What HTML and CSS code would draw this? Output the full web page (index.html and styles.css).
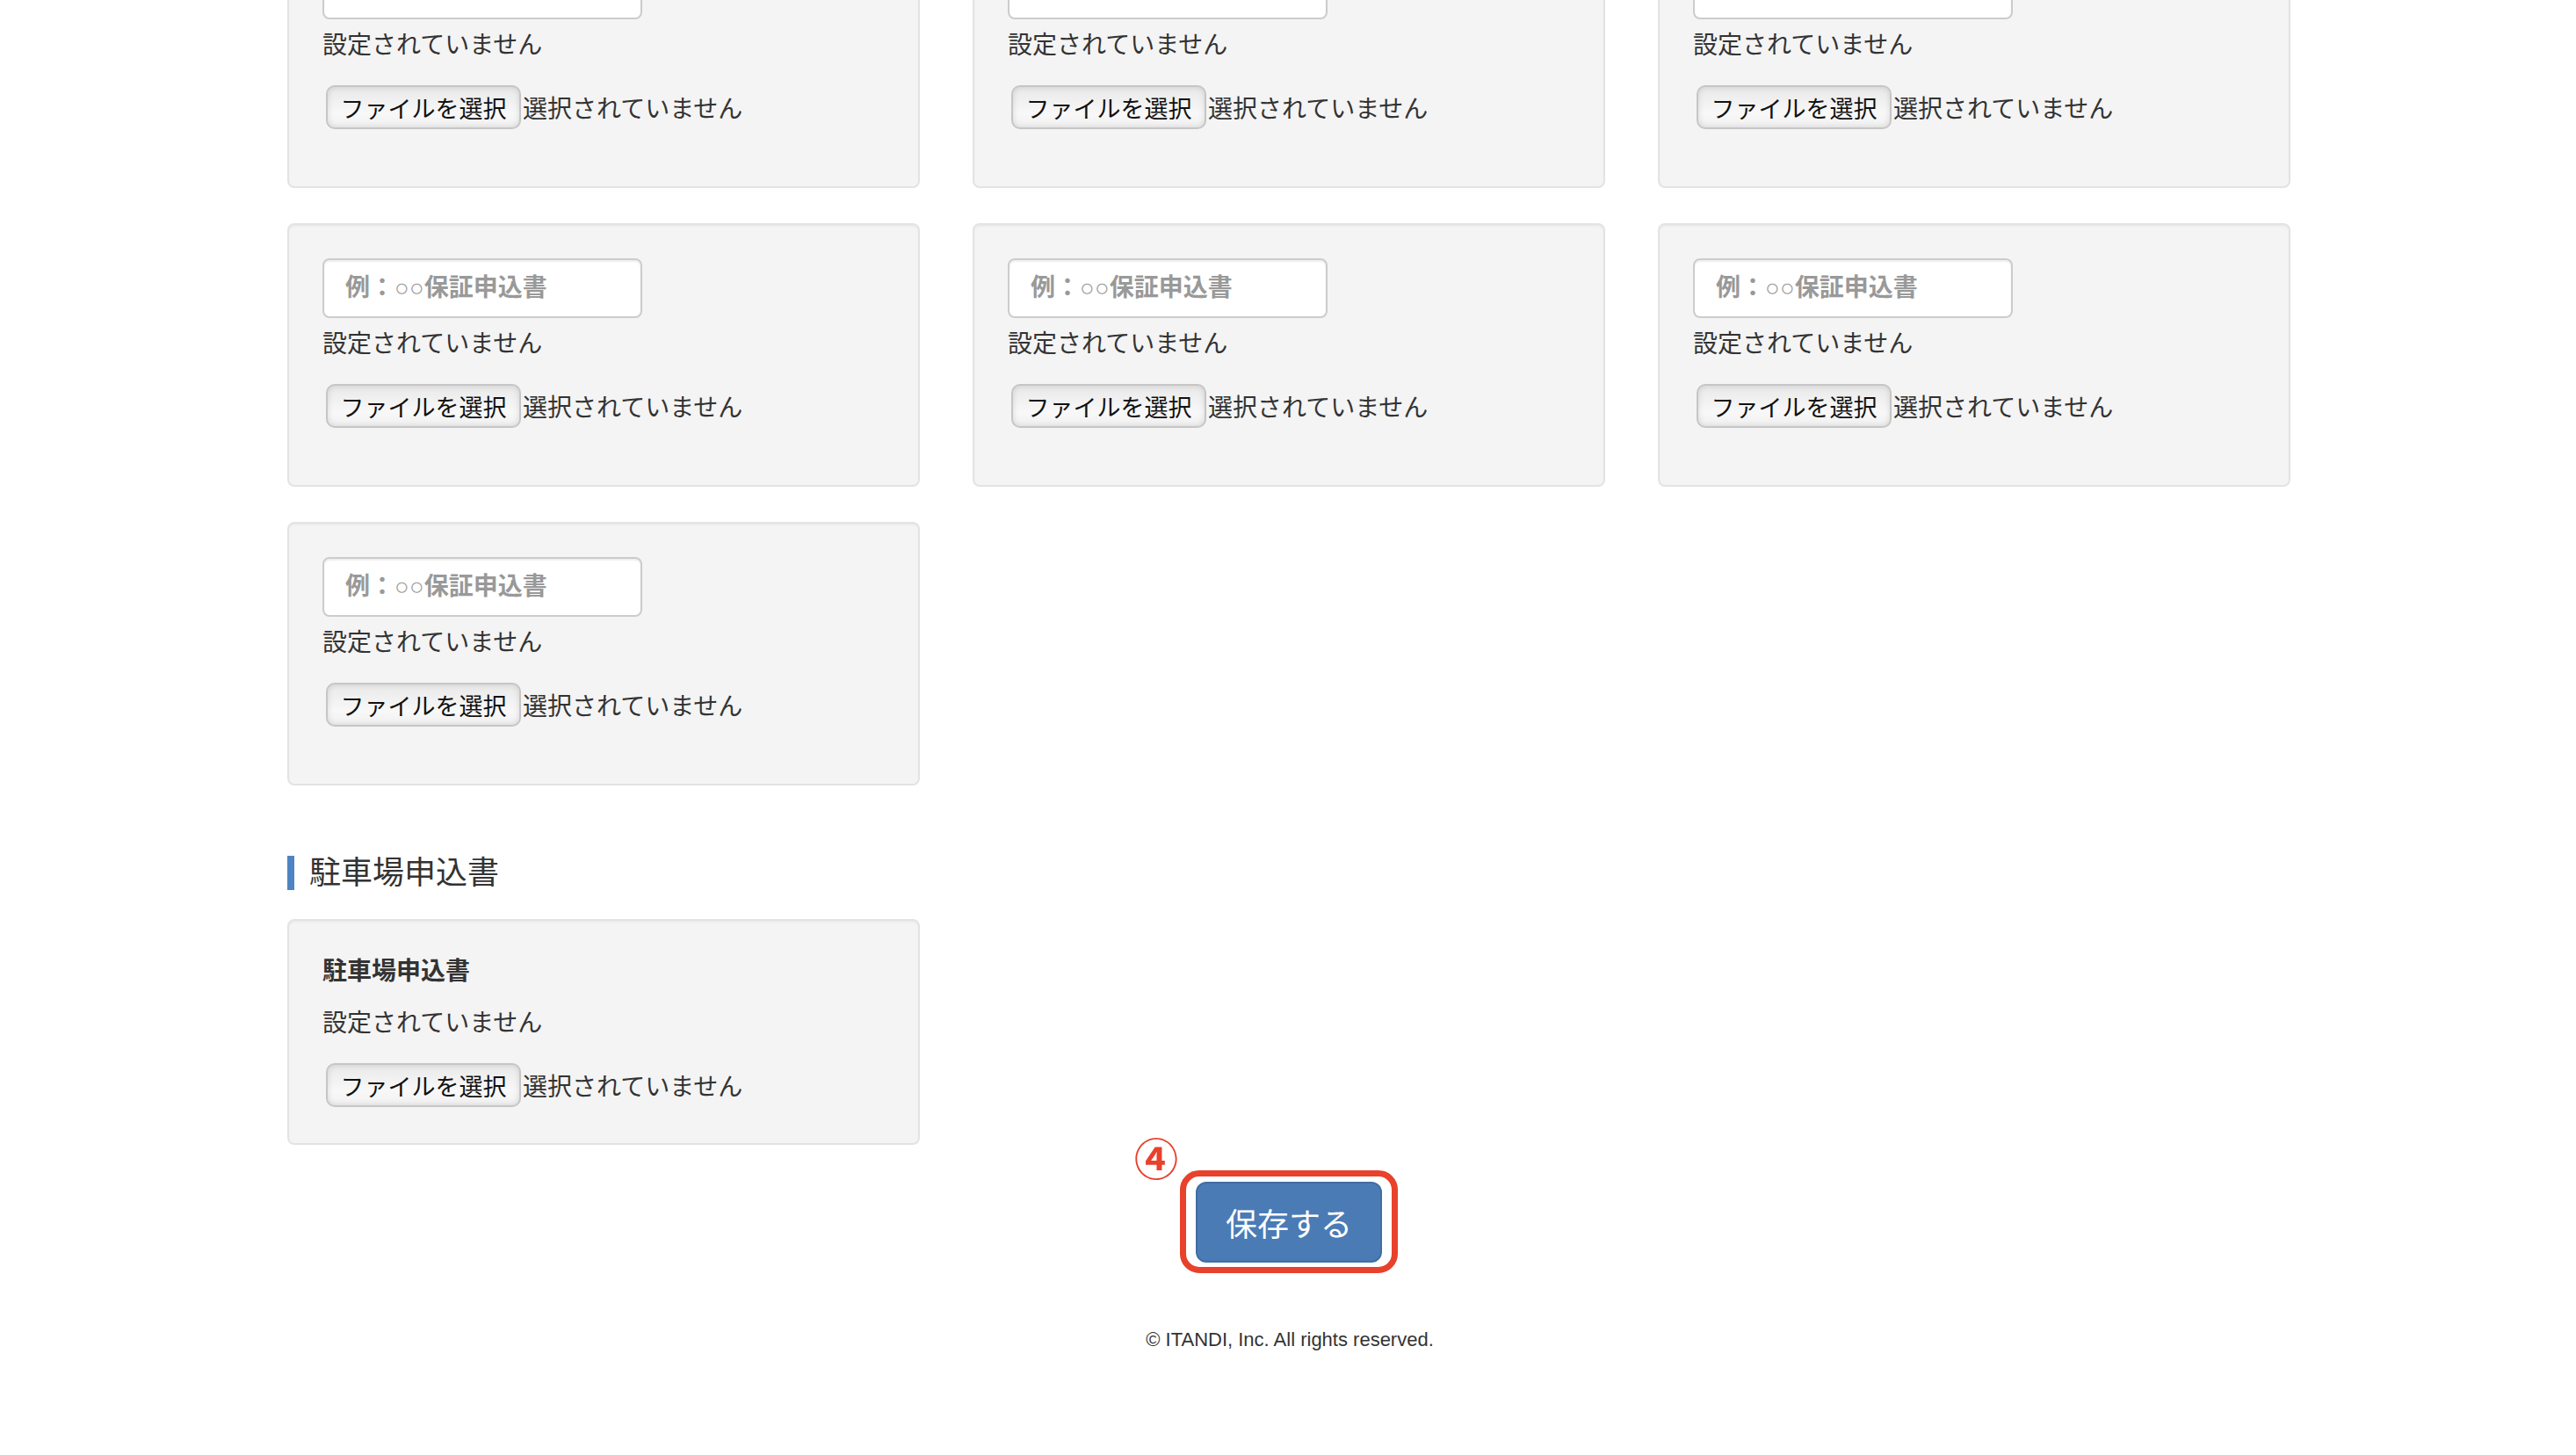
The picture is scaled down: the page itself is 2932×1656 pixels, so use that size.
FILE: index.html
```html
<!DOCTYPE html>
<html lang="ja">
<head>
    <meta charset="utf-8">
    <title>書類設定</title>
    <link rel="stylesheet" href="styles.css">
</head>
<body>
    <div class="container">
        <div class="doc-grid">
            <div class="well well-input">
                <input type="text" class="doc-name" placeholder="例：○○保証申込書">
                <p class="status">設定されていません</p>
                <div class="file-row"><button type="button" class="file-btn">ファイルを選択</button><span class="file-none">選択されていません</span></div>
            </div>
            <div class="well well-input">
                <input type="text" class="doc-name" placeholder="例：○○保証申込書">
                <p class="status">設定されていません</p>
                <div class="file-row"><button type="button" class="file-btn">ファイルを選択</button><span class="file-none">選択されていません</span></div>
            </div>
            <div class="well well-input">
                <input type="text" class="doc-name" placeholder="例：○○保証申込書">
                <p class="status">設定されていません</p>
                <div class="file-row"><button type="button" class="file-btn">ファイルを選択</button><span class="file-none">選択されていません</span></div>
            </div>
            <div class="well well-input">
                <input type="text" class="doc-name" placeholder="例：○○保証申込書">
                <p class="status">設定されていません</p>
                <div class="file-row"><button type="button" class="file-btn">ファイルを選択</button><span class="file-none">選択されていません</span></div>
            </div>
            <div class="well well-input">
                <input type="text" class="doc-name" placeholder="例：○○保証申込書">
                <p class="status">設定されていません</p>
                <div class="file-row"><button type="button" class="file-btn">ファイルを選択</button><span class="file-none">選択されていません</span></div>
            </div>
            <div class="well well-input">
                <input type="text" class="doc-name" placeholder="例：○○保証申込書">
                <p class="status">設定されていません</p>
                <div class="file-row"><button type="button" class="file-btn">ファイルを選択</button><span class="file-none">選択されていません</span></div>
            </div>
            <div class="well well-input">
                <input type="text" class="doc-name" placeholder="例：○○保証申込書">
                <p class="status">設定されていません</p>
                <div class="file-row"><button type="button" class="file-btn">ファイルを選択</button><span class="file-none">選択されていません</span></div>
            </div>
        </div>

        <h3 class="section-title">駐車場申込書</h3>
        <div class="doc-grid">
            <div class="well well-fixed">
                <div class="doc-label">駐車場申込書</div>
                <p class="status">設定されていません</p>
                <div class="file-row"><button type="button" class="file-btn">ファイルを選択</button><span class="file-none">選択されていません</span></div>
            </div>
        </div>

        <div class="actions">
            <div class="save-wrap">
                <span class="mark-num">④</span>
                <button type="submit" class="btn-save">保存する</button>
                <span class="mark-box"></span>
            </div>
        </div>
    </div>

    <footer class="footer">© ITANDI, Inc. All rights reserved.</footer>
</body>
</html>
```

FILE: styles.css
```css
body { margin: 0; background: #fff; color: #333; font-family: "Liberation Sans", "Noto Sans CJK JP", sans-serif; font-size: 28px; line-height: 40px; }
.container { width: 2280px; margin: -86px auto 0; padding-left: 2px; }

.doc-grid { display: grid; grid-template-columns: repeat(3, 720px); column-gap: 60px; row-gap: 40px; }
.well { background: #f4f4f4; border: 2px solid #e3e3e3; border-radius: 8px; padding: 38px; box-shadow: inset 0 2px 2px rgba(0,0,0,0.04); }

.doc-name { display: block; box-sizing: border-box; width: 364px; height: 68px; margin: 0; padding: 12px 24px; border: 2px solid #ccc; border-radius: 8px; background: #fff; font-family: "Liberation Sans", "Noto Sans CJK JP", sans-serif; font-size: 28px; color: #555; box-shadow: inset 0 2px 2px rgba(0,0,0,0.07); }
.doc-name::placeholder { color: #999; font-weight: bold; }

.status { margin: 0; height: 40px; }
.well-input .status { margin-top: 10px; }
.well-fixed .status { margin-top: 19px; }
.doc-label { font-weight: bold; height: 40px; }

.file-row { display: flex; align-items: baseline; margin-top: 25px; height: 50px; }
.well-input .file-row { margin-bottom: 27px; }
.well-fixed .file-row { margin-bottom: 3px; }
.file-btn { box-sizing: border-box; width: 222px; height: 50px; margin: 0 0 0 4px; padding: 0; border: 2px solid #c6c6c6; border-radius: 10px; background: linear-gradient(#e9e9e9, #f8f8f8 65%, #f1f1f1); box-shadow: inset 0 0 7px rgba(0,0,0,0.13); font-family: "Liberation Sans", "Noto Sans CJK JP", sans-serif; font-size: 27px; color: #111; text-align: center; }
.file-none { margin-left: 2px; font-size: 28px; }

.section-title { margin: 80px 0 33px; padding-left: 17px; border-left: 8px solid #4f84c4; font-size: 36px; line-height: 39px; font-weight: normal; color: #333; }

.actions { display: flex; justify-content: center; margin-top: 42px; }
.save-wrap { position: relative; }
.btn-save { box-sizing: border-box; width: 212px; height: 92px; margin: 0; padding: 0; border: 2px solid #416ea3; border-radius: 12px; background: #4a7bb5; color: #fff; font-family: "Liberation Sans", "Noto Sans CJK JP", sans-serif; font-size: 36px; }
.mark-box { position: absolute; left: -18px; top: -13px; width: 248px; height: 117px; box-sizing: border-box; border: 7px solid #e8412c; border-radius: 22px; }
.mark-num { position: absolute; left: -70px; top: -54px; color: #e8412c; font-family: "Noto Sans CJK JP", sans-serif; font-size: 50px; line-height: 50px; font-weight: bold; }

.footer { margin-top: 72px; text-align: center; font-size: 22px; line-height: 32px; color: #333; padding-left: 4px; }
```
